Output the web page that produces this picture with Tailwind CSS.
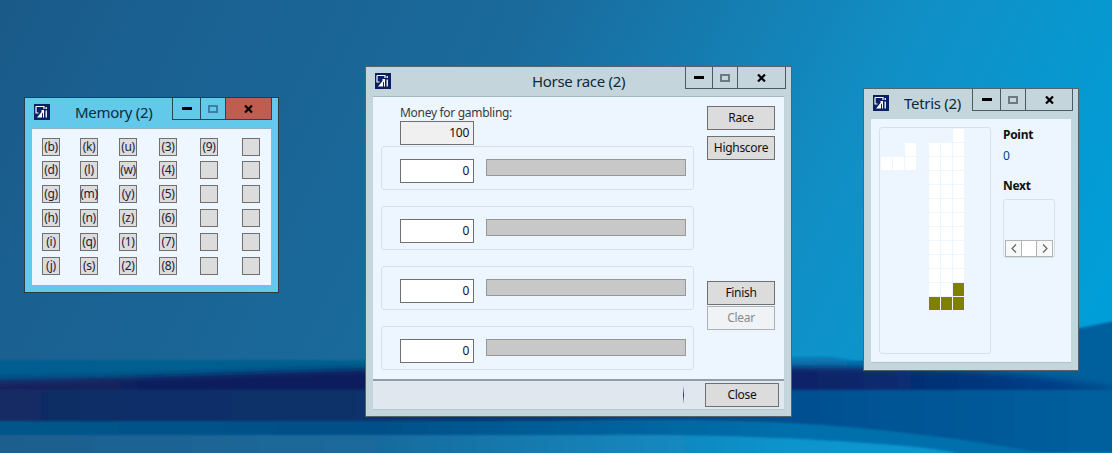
<!DOCTYPE html>
<html>
<head>
<meta charset="utf-8">
<script src="https://cdn.jsdelivr.net/npm/@tailwindcss/browser@4"></script>
</head>
<body class="m-0 overflow-hidden">
<div class="relative w-[1112px] h-[453px] overflow-hidden font-['Noto_Sans','Open_Sans',sans-serif] text-[12px] tracking-[-0.3px] text-[#111]">
  <svg class="absolute inset-0" width="1112" height="453" viewBox="0 0 1112 453">
    <defs>
      <linearGradient id="base" x1="0" y1="0" x2="1000" y2="500" gradientUnits="userSpaceOnUse">
        <stop offset="0" stop-color="#1a5a88"/>
        <stop offset="0.12" stop-color="#1a6090"/>
        <stop offset="0.43" stop-color="#1a6a9c"/>
        <stop offset="0.75" stop-color="#1090c6"/>
        <stop offset="1" stop-color="#009ed8"/>
      </linearGradient>
      <linearGradient id="teal" x1="0" y1="0" x2="1112" y2="0" gradientUnits="userSpaceOnUse">
        <stop offset="0" stop-color="#015d90"/>
        <stop offset="0.33" stop-color="#02608f"/>
        <stop offset="0.72" stop-color="#0878b0"/>
        <stop offset="1" stop-color="#0070ac"/>
      </linearGradient>
      <linearGradient id="navy" x1="0" y1="0" x2="1112" y2="0" gradientUnits="userSpaceOnUse">
        <stop offset="0" stop-color="#13235e"/>
        <stop offset="0.33" stop-color="#0f1a5c"/>
        <stop offset="0.75" stop-color="#0a2568"/>
        <stop offset="0.95" stop-color="#003f88"/>
        <stop offset="1" stop-color="#00508f"/>
      </linearGradient>
      <linearGradient id="body" x1="0" y1="0" x2="1112" y2="0" gradientUnits="userSpaceOnUse">
        <stop offset="0" stop-color="#132c64"/>
        <stop offset="0.33" stop-color="#08326c"/>
        <stop offset="0.71" stop-color="#004f90"/>
        <stop offset="1" stop-color="#00609e"/>
      </linearGradient>
      <linearGradient id="strip" x1="0" y1="0" x2="1112" y2="0" gradientUnits="userSpaceOnUse">
        <stop offset="0" stop-color="#05568a"/>
        <stop offset="0.33" stop-color="#024f88"/>
        <stop offset="0.71" stop-color="#0070ac"/>
        <stop offset="1" stop-color="#0070ac"/>
      </linearGradient>
      <linearGradient id="tail" x1="0" y1="0" x2="1112" y2="0" gradientUnits="userSpaceOnUse">
        <stop offset="0" stop-color="#1a5f8e"/>
        <stop offset="0.33" stop-color="#1a6a9c"/>
        <stop offset="0.71" stop-color="#0f94cc"/>
        <stop offset="1" stop-color="#0a9ad2"/>
      </linearGradient>
      <filter id="b4" x="-5%" y="-20%" width="110%" height="140%"><feGaussianBlur stdDeviation="3"/></filter>
      <filter id="b1" x="-5%" y="-20%" width="110%" height="140%"><feGaussianBlur stdDeviation="1"/></filter>
    </defs>
    <rect width="1112" height="453" fill="url(#base)"/>
    <path d="M780 366 C900 362 1000 345 1130 318 V400 H780Z" fill="#00609e" filter="url(#b1)"/>
    <path d="M-20 360 H520 C640 358 720 358 830 357 L900 368 V382 H-20Z" fill="url(#teal)" filter="url(#b1)"/>
    <path d="M-20 380 C120 378 260 372 365 369 C520 366 700 366 860 367 C960 368 1040 376 1130 388 V395 H-20Z" fill="url(#navy)" filter="url(#b4)"/>
    <path d="M-20 390 H1130 V453 H-20Z" fill="url(#body)" filter="url(#b1)"/>
    <path d="M-20 421 H560 C680 418 780 420 860 428 C940 436 1010 445 1060 458 H-20Z" fill="url(#strip)" filter="url(#b1)"/>
    <path d="M-20 435 H600 C700 434 800 438 880 444 C920 447 950 450 975 458 H-20Z" fill="url(#tail)" filter="url(#b1)"/>
  </svg>

  <!-- Memory -->
  <section class="absolute left-[24px] top-[97px] w-[255px] h-[196px] border border-[#2d3a42] bg-[#62c9eb] flex flex-col">
    <header class="flex h-[22px] shrink-0 pl-[9px]">
      <svg class="mt-[6px]" width="16" height="16" viewBox="0 0 16 16"><rect width="16" height="16" fill="#0b1f63"/><path d="M2 2.500H10V5M2 2.500V9H4.500" fill="none" stroke="#fff" stroke-width="1.200"/><path d="M3 13.500L7.500 8V6H10V13.500H9V8.500L8 9.500V13.500Z" fill="#fff"/><path d="M11.500 6.500H13V13.500H11.500ZM11.500 3H13V5H11.500Z" fill="#dfe6f2"/></svg>
      <h1 class="ml-[25px] mt-[3px] text-[15px] leading-[22px] font-normal text-[#0d2a3c]">Memory (2)</h1>
      <div class="ml-auto mr-[6px] flex h-[22px] border border-t-0 border-[#2d4450]">
        <div class="w-[28px] flex items-center justify-center border-r border-[#2d4450]"><span class="w-[10px] h-[3px] bg-black"></span></div>
        <div class="w-[25px] flex items-center justify-center border-r border-[#2d4450]"><span class="w-[10px] h-[8px] border-2 border-[#3d7f9f]"></span></div>
        <div class="w-[45px] flex items-center justify-center bg-[#c25c51]"><svg width="9" height="8" viewBox="0 0 9 8"><path d="M1 .5L8 7.500M8 .5L1 7.500" stroke="#000" stroke-width="2.200"/></svg></div>
      </div>
    </header>
    <main class="ml-[7px] mt-[8px] w-[239px] h-[157px] bg-[#eef7ff] border-t border-[#8db4c8] pl-[10px] pt-[9px]">
      <div class="grid grid-cols-[38px_39px_40px_41px_42px_18px] grid-rows-[23px_24px_24px_24px_24px_18px] text-[12px] leading-[16px] text-[#1d1a3a]">
        <div class="w-[18px] h-[18px] border border-[#707070] bg-[#dcdcdc] flex items-center justify-center whitespace-nowrap">(b)</div>
        <div class="w-[18px] h-[18px] border border-[#707070] bg-[#dcdcdc] flex items-center justify-center whitespace-nowrap">(k)</div>
        <div class="w-[18px] h-[18px] border border-[#707070] bg-[#dcdcdc] flex items-center justify-center whitespace-nowrap">(u)</div>
        <div class="w-[18px] h-[18px] border border-[#707070] bg-[#dcdcdc] flex items-center justify-center whitespace-nowrap">(3)</div>
        <div class="w-[18px] h-[18px] border border-[#707070] bg-[#dcdcdc] flex items-center justify-center whitespace-nowrap">(9)</div>
        <div class="w-[18px] h-[18px] border border-[#707070] bg-[#dcdcdc]"></div>
        <div class="w-[18px] h-[18px] border border-[#707070] bg-[#dcdcdc] flex items-center justify-center whitespace-nowrap">(d)</div>
        <div class="w-[18px] h-[18px] border border-[#707070] bg-[#dcdcdc] flex items-center justify-center whitespace-nowrap">(l)</div>
        <div class="w-[18px] h-[18px] border border-[#707070] bg-[#dcdcdc] flex items-center justify-center whitespace-nowrap">(w)</div>
        <div class="w-[18px] h-[18px] border border-[#707070] bg-[#dcdcdc] flex items-center justify-center whitespace-nowrap">(4)</div>
        <div class="w-[18px] h-[18px] border border-[#707070] bg-[#dcdcdc]"></div>
        <div class="w-[18px] h-[18px] border border-[#707070] bg-[#dcdcdc]"></div>
        <div class="w-[18px] h-[18px] border border-[#707070] bg-[#dcdcdc] flex items-center justify-center whitespace-nowrap">(g)</div>
        <div class="w-[18px] h-[18px] border border-[#707070] bg-[#dcdcdc] flex items-center justify-center whitespace-nowrap">(m)</div>
        <div class="w-[18px] h-[18px] border border-[#707070] bg-[#dcdcdc] flex items-center justify-center whitespace-nowrap">(y)</div>
        <div class="w-[18px] h-[18px] border border-[#707070] bg-[#dcdcdc] flex items-center justify-center whitespace-nowrap">(5)</div>
        <div class="w-[18px] h-[18px] border border-[#707070] bg-[#dcdcdc]"></div>
        <div class="w-[18px] h-[18px] border border-[#707070] bg-[#dcdcdc]"></div>
        <div class="w-[18px] h-[18px] border border-[#707070] bg-[#dcdcdc] flex items-center justify-center whitespace-nowrap">(h)</div>
        <div class="w-[18px] h-[18px] border border-[#707070] bg-[#dcdcdc] flex items-center justify-center whitespace-nowrap">(n)</div>
        <div class="w-[18px] h-[18px] border border-[#707070] bg-[#dcdcdc] flex items-center justify-center whitespace-nowrap">(z)</div>
        <div class="w-[18px] h-[18px] border border-[#707070] bg-[#dcdcdc] flex items-center justify-center whitespace-nowrap">(6)</div>
        <div class="w-[18px] h-[18px] border border-[#707070] bg-[#dcdcdc]"></div>
        <div class="w-[18px] h-[18px] border border-[#707070] bg-[#dcdcdc]"></div>
        <div class="w-[18px] h-[18px] border border-[#707070] bg-[#dcdcdc] flex items-center justify-center whitespace-nowrap">(i)</div>
        <div class="w-[18px] h-[18px] border border-[#707070] bg-[#dcdcdc] flex items-center justify-center whitespace-nowrap">(q)</div>
        <div class="w-[18px] h-[18px] border border-[#707070] bg-[#dcdcdc] flex items-center justify-center whitespace-nowrap">(1)</div>
        <div class="w-[18px] h-[18px] border border-[#707070] bg-[#dcdcdc] flex items-center justify-center whitespace-nowrap">(7)</div>
        <div class="w-[18px] h-[18px] border border-[#707070] bg-[#dcdcdc]"></div>
        <div class="w-[18px] h-[18px] border border-[#707070] bg-[#dcdcdc]"></div>
        <div class="w-[18px] h-[18px] border border-[#707070] bg-[#dcdcdc] flex items-center justify-center whitespace-nowrap">(j)</div>
        <div class="w-[18px] h-[18px] border border-[#707070] bg-[#dcdcdc] flex items-center justify-center whitespace-nowrap">(s)</div>
        <div class="w-[18px] h-[18px] border border-[#707070] bg-[#dcdcdc] flex items-center justify-center whitespace-nowrap">(2)</div>
        <div class="w-[18px] h-[18px] border border-[#707070] bg-[#dcdcdc] flex items-center justify-center whitespace-nowrap">(8)</div>
        <div class="w-[18px] h-[18px] border border-[#707070] bg-[#dcdcdc]"></div>
        <div class="w-[18px] h-[18px] border border-[#707070] bg-[#dcdcdc]"></div>
      </div>
    </main>
  </section>

  <!-- Horse race -->
  <section class="absolute left-[365px] top-[66px] w-[427px] h-[351px] border border-[#55636b] bg-[#c4d6dc] flex flex-col">
    <header class="flex h-[22px] shrink-0 pl-[9px]">
      <svg class="mt-[6px]" width="16" height="16" viewBox="0 0 16 16"><rect width="16" height="16" fill="#0b1f63"/><path d="M2 2.500H10V5M2 2.500V9H4.500" fill="none" stroke="#fff" stroke-width="1.200"/><path d="M3 13.500L7.500 8V6H10V13.500H9V8.500L8 9.500V13.500Z" fill="#fff"/><path d="M11.500 6.500H13V13.500H11.500ZM11.500 3H13V5H11.500Z" fill="#dfe6f2"/></svg>
      <h1 class="ml-[141px] mt-[3px] text-[15px] leading-[22px] font-normal text-[#0d2a3c]">Horse race (2)</h1>
      <div class="ml-auto mr-[5px] flex h-[22px] border border-t-0 border-[#4c5a62]">
        <div class="w-[27px] flex items-center justify-center border-r border-[#4c5a62]"><span class="w-[10px] h-[3px] bg-black"></span></div>
        <div class="w-[25px] flex items-center justify-center border-r border-[#4c5a62]"><span class="w-[10px] h-[8px] border-2 border-[#6f7a80]"></span></div>
        <div class="w-[47px] flex items-center justify-center"><svg width="9" height="8" viewBox="0 0 9 8"><path d="M1 .5L8 7.500M8 .5L1 7.500" stroke="#000" stroke-width="2.200"/></svg></div>
      </div>
    </header>
    <main class="ml-[7px] mt-[7px] w-[411px] h-[314px] flex flex-col bg-[#edf6fe] border-t border-[#a4b8c2]">
      <div class="flex flex-1">
        <div class="w-[321px] pl-[8px]">
          <div class="ml-[19px] h-[49px] pt-[8px]">
            <p class="leading-[16px] text-[#3a3a3a]">Money for gambling:</p>
            <div class="w-[74px] h-[24px] border border-[#707070] bg-[#f0f0f0] flex items-center justify-end pr-[4px]">100</div>
          </div>
          <div class="flex flex-col gap-[16px]">
            <div class="w-[313px] h-[44px] border border-[#d5e0e8] rounded-[3px] pl-[18px] pt-[12px] flex gap-[12px] items-start">
              <div class="w-[74px] h-[24px] border border-[#707070] bg-white flex items-center justify-end pr-[4px]">0</div>
              <div class="w-[200px] h-[17px] border border-[#979797] bg-[#c8c8c8]"></div>
            </div>
            <div class="w-[313px] h-[44px] border border-[#d5e0e8] rounded-[3px] pl-[18px] pt-[12px] flex gap-[12px] items-start">
              <div class="w-[74px] h-[24px] border border-[#707070] bg-white flex items-center justify-end pr-[4px]">0</div>
              <div class="w-[200px] h-[17px] border border-[#979797] bg-[#c8c8c8]"></div>
            </div>
            <div class="w-[313px] h-[44px] border border-[#d5e0e8] rounded-[3px] pl-[18px] pt-[12px] flex gap-[12px] items-start">
              <div class="w-[74px] h-[24px] border border-[#707070] bg-white flex items-center justify-end pr-[4px]">0</div>
              <div class="w-[200px] h-[17px] border border-[#979797] bg-[#c8c8c8]"></div>
            </div>
            <div class="w-[313px] h-[44px] border border-[#d5e0e8] rounded-[3px] pl-[18px] pt-[12px] flex gap-[12px] items-start">
              <div class="w-[74px] h-[24px] border border-[#707070] bg-white flex items-center justify-end pr-[4px]">0</div>
              <div class="w-[200px] h-[17px] border border-[#979797] bg-[#c8c8c8]"></div>
            </div>
          </div>
        </div>
        <div class="ml-[13px] w-[68px] pt-[9px] flex flex-col">
          <div class="h-[24px] border border-[#707070] bg-[#dcdcdc] flex items-center justify-center">Race</div>
          <div class="mt-[6px] h-[24px] border border-[#707070] bg-[#dcdcdc] flex items-center justify-center">Highscore</div>
          <div class="mt-[121px] h-[24px] border border-[#707070] bg-[#dcdcdc] flex items-center justify-center">Finish</div>
          <div class="mt-[1px] h-[24px] border border-[#adb2b5] bg-[#f0f3f5] text-[#8a8a8a] flex items-center justify-center">Clear</div>
        </div>
      </div>
      <footer class="h-[31px] border-t-2 border-[#8f9dab] border-b border-b-[#b4c6cf] bg-[#e0e7ef] flex items-center shrink-0 relative">
        <span class="ml-[310px] w-px h-[18px] bg-gradient-to-b from-transparent via-[#1d3a5c] to-transparent"></span>
        <div class="ml-[21px] w-[74px] h-[24px] border border-[#707070] bg-[#dcdcdc] flex items-center justify-center">Close</div>
      </footer>
    </main>
  </section>

  <!-- Tetris -->
  <section class="absolute left-[863px] top-[88px] w-[216px] h-[283px] border border-[#55636b] bg-[#c4d6dc] flex flex-col">
    <header class="flex h-[22px] shrink-0 pl-[9px]">
      <svg class="mt-[6px]" width="16" height="16" viewBox="0 0 16 16"><rect width="16" height="16" fill="#0b1f63"/><path d="M2 2.500H10V5M2 2.500V9H4.500" fill="none" stroke="#fff" stroke-width="1.200"/><path d="M3 13.500L7.500 8V6H10V13.500H9V8.500L8 9.500V13.500Z" fill="#fff"/><path d="M11.500 6.500H13V13.500H11.500ZM11.500 3H13V5H11.500Z" fill="#dfe6f2"/></svg>
      <h1 class="ml-[15px] mt-[3px] text-[15px] leading-[22px] font-normal text-[#0d2a3c]">Tetris (2)</h1>
      <div class="ml-auto mr-[5px] flex h-[22px] border border-t-0 border-[#4c5a62]">
        <div class="w-[28px] flex items-center justify-center border-r border-[#4c5a62]"><span class="w-[10px] h-[3px] bg-black"></span></div>
        <div class="w-[25px] flex items-center justify-center border-r border-[#4c5a62]"><span class="w-[10px] h-[8px] border-2 border-[#6f7a80]"></span></div>
        <div class="w-[46px] flex items-center justify-center"><svg width="9" height="8" viewBox="0 0 9 8"><path d="M1 .5L8 7.500M8 .5L1 7.500" stroke="#000" stroke-width="2.200"/></svg></div>
      </div>
    </header>
    <main class="ml-[7px] mt-[8px] w-[200px] h-[244px] bg-[#edf6fe] border-b border-[#adbfc8] flex pl-[8px] pt-[8px]">
      <div class="w-[112px] h-[227px] border border-[#d5e0e8] rounded-[3px] pl-[1px] pt-[1px]">
        <div class="grid grid-cols-[repeat(7,12px)] grid-rows-[repeat(13,14px)] [&>b]:w-[11px] [&>b]:h-[13px] [&>b]:bg-white">
          <i></i><i></i><i></i><i></i><i></i><i></i><b></b>
          <i></i><i></i><b></b><i></i><b></b><b></b><b></b>
          <b></b><b></b><b></b><i></i><b></b><b></b><b></b>
          <i></i><i></i><i></i><i></i><b></b><b></b><b></b>
          <i></i><i></i><i></i><i></i><b></b><b></b><b></b>
          <i></i><i></i><i></i><i></i><b></b><b></b><b></b>
          <i></i><i></i><i></i><i></i><b></b><b></b><b></b>
          <i></i><i></i><i></i><i></i><b></b><b></b><b></b>
          <i></i><i></i><i></i><i></i><b></b><b></b><b></b>
          <i></i><i></i><i></i><i></i><b></b><b></b><b></b>
          <i></i><i></i><i></i><i></i><b></b><b></b><b></b>
          <i></i><i></i><i></i><i></i><b></b><b></b><div class="w-[11px] h-[13px] bg-[#808000]"></div>
          <i></i><i></i><i></i><i></i><div class="w-[11px] h-[13px] bg-[#808000]"></div><div class="w-[11px] h-[13px] bg-[#808000]"></div><div class="w-[11px] h-[13px] bg-[#808000]"></div>
        </div>
      </div>
      <aside class="ml-[12px] w-[52px]">
        <p class="font-bold leading-[16px]">Point</p>
        <p class="mt-[5px] leading-[16px] text-[#0b3a8c]">0</p>
        <p class="mt-[14px] font-bold leading-[16px]">Next</p>
        <div class="mt-[5px] w-[52px] h-[59px] border border-[#d5e0e8] rounded-[3px] pt-[40px] px-[1px]">
          <div class="flex h-[17px] border border-[#b4b4b4] bg-[#f7f8f8]">
            <div class="w-[16px] flex items-center justify-center border-r border-[#b4b4b4]"><svg width="6" height="9" viewBox="0 0 6 9"><path d="M5 .5L1 4.500L5 8.500" fill="none" stroke="#666" stroke-width="1.200"/></svg></div>
            <div class="flex-1 bg-white"></div>
            <div class="w-[16px] flex items-center justify-center border-l border-[#b4b4b4]"><svg width="6" height="9" viewBox="0 0 6 9"><path d="M1 .5L5 4.500L1 8.500" fill="none" stroke="#666" stroke-width="1.200"/></svg></div>
          </div>
        </div>
      </aside>
    </main>
  </section>
</div>
</body>
</html>
